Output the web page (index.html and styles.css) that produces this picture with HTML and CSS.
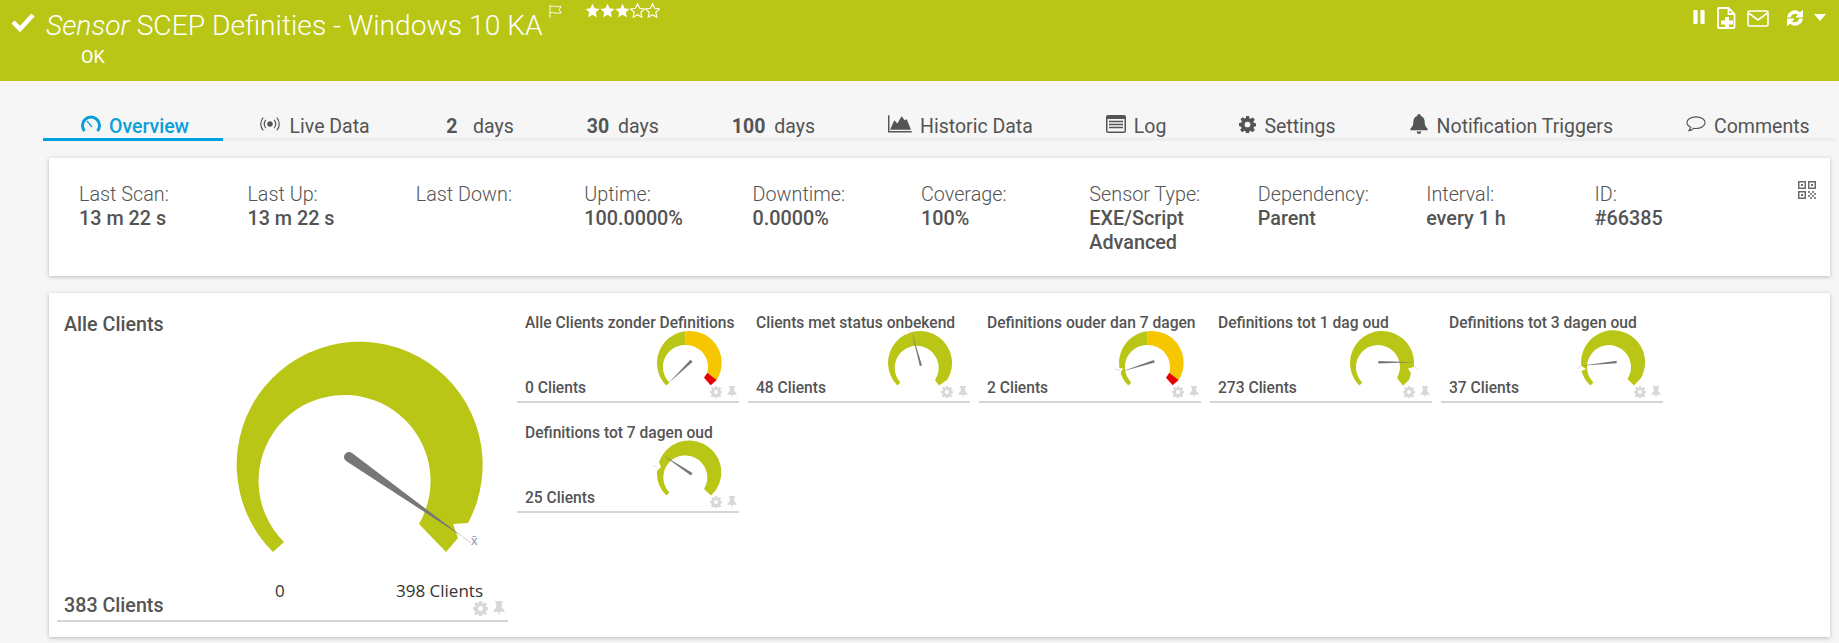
FILE: index.html
```html
<!DOCTYPE html>
<html>
<head>
    <title>SCEP Definities - Windows 10 KA</title>
    <link rel="stylesheet" href="styles.css">
</head>
<body>
    <svg class="icon-defs" width="0" height="0">
        <symbol id="gear" viewBox="0 0 16 16"><path fill-rule="evenodd" d="M6.600 0h2.800l.4 2.200 1.200.5L12.900 1.400l2 2-1.300 1.900.5 1.200 2.200.4v2.800l-2.200.4-.5 1.200 1.300 1.900-2 2-1.900-1.300-1.200.5-.4 2.200H6.600l-.4-2.200-1.200-.5-1.900 1.300-2-2 1.300-1.900-.5-1.200L0 9.400V6.600l2.200-.4.5-1.200L1.400 3.100l2-2 1.900 1.300 1.200-.5zM8 5.300a2.700 2.700 0 1 0 0 5.400 2.700 2.700 0 0 0 0-5.400z"/></symbol>
        <symbol id="pin" viewBox="0 0 12 16"><path d="M2 0h8v1.500L9 2v5l3 3v1.500H7L6 16l-1-4.500H0V10l3-3V2L2 1.500z"/></symbol>
        <symbol id="star" viewBox="0 0 16 16"><path d="M8 .8l2.200 4.900 5.300.6-4 3.600 1.100 5.300L8 12.500l-4.600 2.700 1.100-5.300-4-3.600 5.300-.6z"/></symbol>
    </svg>

    <header class="top-bar">
        <div class="top-title">
            <svg class="check" viewBox="0 0 24 20"><path d="M2 10l7 7L22 3" fill="none" stroke="#fff" stroke-width="4.500"/></svg>
            <h1><em>Sensor</em> SCEP Definities - Windows 10 KA</h1>
            <svg class="flag" viewBox="0 0 16 14"><path d="M1.500 0v14M1.500 1.500c4-1.500 6 1.500 12 0l-2 3.500 2 3.500c-6 1.500-8-1.500-12 0" fill="none" stroke="#fff"/></svg>
            <div class="stars">
                <svg class="star"><use href="#star"/></svg>
                <svg class="star"><use href="#star"/></svg>
                <svg class="star"><use href="#star"/></svg>
                <svg class="star empty"><use href="#star"/></svg>
                <svg class="star empty"><use href="#star"/></svg>
            </div>
            <div class="status">OK</div>
        </div>
        <div class="top-actions">
            <svg class="pause" viewBox="0 0 12 16"><rect x="0" y="0" width="4.500" height="15" rx="1.200" fill="#fff"/><rect x="7.500" y="0" width="4.500" height="15" rx="1.200" fill="#fff"/></svg>
            <svg class="add-page" viewBox="0 0 19 22"><path d="M1.500 1h10l6 6v13a1 1 0 0 1-1 1H2a1 1 0 0 1-1-1V1.500zM11.500 1v6h6" fill="none" stroke="#fff" stroke-width="1.800"/><path d="M8 10h4v3.500h4v4h-4V21H8v-3.500H4v-4h4z" fill="#fff"/></svg>
            <svg class="mail" viewBox="0 0 22 17"><rect x="1" y="1" width="20" height="15" rx="1.500" fill="none" stroke="#fff" stroke-width="1.600"/><path d="M1.500 3l9.500 7 9.500-7" fill="none" stroke="#fff" stroke-width="1.600"/></svg>
            <svg class="refresh" viewBox="0 0 20 18"><path d="M2.500 8A7.500 7.500 0 0 1 15 3.700L17.500 1.500v6.500H11l2.400-2.400A4.800 4.800 0 0 0 5.500 8zM17.500 10A7.500 7.500 0 0 1 5 14.300L2.500 16.500V10H9l-2.400 2.400A4.800 4.800 0 0 0 14.500 10z" fill="#fff" stroke="#fff"/></svg>
            <svg class="caret" viewBox="0 0 12 7"><path d="M0 0h12L6 7z" fill="#fff"/></svg>
        </div>
    </header>

    <nav class="tabs">
        <a class="tab active">
            <svg class="tab-icon" viewBox="0 0 20 18"><path d="M3.500 16A8.500 8.500 0 1 1 16.500 16" fill="none" stroke="#0a9fd8" stroke-width="3"/><path d="M6 6l5 6" stroke="#0a9fd8" stroke-width="1.200"/></svg>
            Overview
        </a>
        <a class="tab">
            <svg class="tab-icon icon-live" viewBox="0 0 22 18"><circle cx="11" cy="9" r="3" fill="#545454"/><path d="M6.500 4.500a6.500 6.500 0 0 0 0 9M15.500 4.500a6.500 6.500 0 0 1 0 9M3.500 2a10.500 10.500 0 0 0 0 14M18.500 2a10.500 10.500 0 0 1 0 14" fill="none" stroke="#545454" stroke-width="1.300"/></svg>
            Live Data
        </a>
        <a class="tab range-first"><b>2</b>&nbsp; days</a>
        <a class="tab"><b>30</b>&nbsp;days</a>
        <a class="tab"><b>100</b>&nbsp;days</a>
        <a class="tab">
            <svg class="tab-icon icon-wide" viewBox="0 0 23 17"><path d="M2 14l4-9 3 3 4-7 3 4 2-1 4 10z" fill="#545454"/><path d="M.7 0v16h22" fill="none" stroke="#545454" stroke-width="1.400"/></svg>
            Historic Data
        </a>
        <a class="tab">
            <svg class="tab-icon" viewBox="0 0 20 18"><rect width="20" height="18" rx="2" fill="#545454"/><rect x="1.500" y="4" width="17" height="12.500" fill="#f6f6f6"/><path d="M3 6.500h14M3 9.500h14M3 12.500h14" stroke="#545454" stroke-width="1.600"/></svg>
            Log
        </a>
        <a class="tab">
            <svg class="tab-icon gear-tab"><use href="#gear"/></svg>
            Settings
        </a>
        <a class="tab">
            <svg class="tab-icon icon-bell" viewBox="0 0 19 21"><path d="M9.500 0a2 2 0 0 1 2 2c3 1 4 3.500 4 7 0 3 1 4.500 3 6.500v1.500H.5v-1.500c2-2 3-3.500 3-6.500 0-3.500 1-6 4-7a2 2 0 0 1 2-2zM7 18.500h5a2.500 2.500 0 0 1-5 0z" fill="#545454"/></svg>
            Notification Triggers
        </a>
        <a class="tab">
            <svg class="tab-icon" viewBox="0 0 21 17"><path d="M10.500 1C5 1 1 3.700 1 7c0 2 1.500 3.800 4 5-.3 1.300-1 2.300-2 3.500 2 0 3.700-1 5-2.500.8.100 1.600.2 2.500.2 5.500 0 9.500-2.900 9.500-6.200S16 1 10.500 1z" fill="none" stroke="#545454" stroke-width="1.200"/></svg>
            Comments
        </a>
    </nav>

    <section class="panel info-panel">
        <dl class="info"><dt>Last Scan:</dt><dd>13 m 22 s</dd></dl>
        <dl class="info"><dt>Last Up:</dt><dd>13 m 22 s</dd></dl>
        <dl class="info"><dt>Last Down:</dt><dd></dd></dl>
        <dl class="info"><dt>Uptime:</dt><dd>100.0000%</dd></dl>
        <dl class="info"><dt>Downtime:</dt><dd>0.0000%</dd></dl>
        <dl class="info"><dt>Coverage:</dt><dd>100%</dd></dl>
        <dl class="info"><dt>Sensor Type:</dt><dd>EXE/Script Advanced</dd></dl>
        <dl class="info"><dt>Dependency:</dt><dd>Parent</dd></dl>
        <dl class="info"><dt>Interval:</dt><dd>every 1 h</dd></dl>
        <dl class="info"><dt>ID:</dt><dd>#66385</dd></dl>
        <svg class="qr" viewBox="0 0 18 18">
            <path d="M0 0h8v8H0zM10 0h8v8h-8zM0 10h8v8H0z" fill="#6a6a6a"/>
            <path d="M1.500 1.500h5v5h-5zM11.500 1.500h5v5h-5zM1.500 11.500h5v5h-5z" fill="#fff"/>
            <path d="M3 3h2v2H3zM13 3h2v2h-2zM3 13h2v2H3z" fill="#6a6a6a"/>
            <path d="M10 10h2v2h-2zM14 10h2v2h-2zM12 12h2v2h-2zM16 12h2v2h-2zM10 14h2v2h-2zM14 14h2v2h-2zM12 16h2v2h-2zM16 16h2v2h-2z" fill="#8a8a8a"/>
        </svg>
    </section>

    <section class="panel gauges-panel">
        <div class="main-gauge">
            <h2>Alle Clients</h2>
            <svg class="big-dial" viewBox="0 0 290 260">
                <path d="M65 242A123 123 0 1 1 260 213L245 214L250 228L238 242L211 214A86 86 0 1 0 76 232Z" fill="#b9c616"/>
                <path d="M144 143L255 227L138 151A5 5 0 0 1 144 143Z" fill="#777"/>
                <path d="M255 227L263 233" stroke="#ccc"/>
            </svg>
            <span class="avg">x&#772;</span>
            <span class="scale-min">0</span>
            <span class="scale-max">398 Clients</span>
            <div class="main-value">383 Clients</div>
            <div class="tools">
                <svg class="tool-gear"><use href="#gear"/></svg>
                <svg class="tool-pin"><use href="#pin"/></svg>
            </div>
        </div>

        <div class="small-gauges">
            <div class="gauge">
                <h3>Alle Clients zonder Definitions</h3>
                <svg class="dial" viewBox="-40 -36 80 66">
                    <path d="M-22.600 22.600A32 32 0 0 1-3.700-31.800L-4-18A22 22 0 0 0-19.600 19.600Z" fill="#b9c616"/>
                    <path d="M-3.700-31.800A32 32 0 0 1 27.700 17L18.300 9.700A22 22 0 0 0-4-18Z" fill="#f6c600"/>
                    <path d="M27.700 17L18.300 9.700 15 14.700 21.700 22.300Z" fill="#e60000"/>
                    <path d="M1.500-3.200L3.700-1.300-20.700 20.300Z" fill="#777"/>
                </svg>
                <div class="gauge-value">0 Clients</div>
                <div class="tools">
                    <svg class="tool-gear"><use href="#gear"/></svg>
                    <svg class="tool-pin"><use href="#pin"/></svg>
                </div>
            </div>
            <div class="gauge">
                <h3>Clients met status onbekend</h3>
                <svg class="dial" viewBox="-40 -36 80 66">
                    <path d="M-22.600 22.600A32 32 0 1 1 27.500 16.400L19 22.500 15 17A22 22 0 1 0-19.600 19.600Z" fill="#b9c616"/>
                    <path d="M-14.300-28L-11.700-34-8.300-32Z" fill="#fff"/>
                    <path d="M-11.500-33.500L-9.500-31.500" stroke="#ddd"/>
                    <path d="M-.2 3L2 2.500-8.300-31.300Z" fill="#777"/>
                </svg>
                <div class="gauge-value">48 Clients</div>
                <div class="tools">
                    <svg class="tool-gear"><use href="#gear"/></svg>
                    <svg class="tool-pin"><use href="#pin"/></svg>
                </div>
            </div>
            <div class="gauge">
                <h3>Definitions ouder dan 7 dagen</h3>
                <svg class="dial" viewBox="-40 -36 80 66">
                    <path d="M-22.600 22.600A32 32 0 0 1-3.700-31.800L-4-18A22 22 0 0 0-19.600 19.600Z" fill="#b9c616"/>
                    <path d="M-3.700-31.800A32 32 0 0 1 27.700 17L18.300 9.700A22 22 0 0 0-4-18Z" fill="#f6c600"/>
                    <path d="M27.700 17L18.300 9.700 15 14.700 21.700 22.300Z" fill="#e60000"/>
                    <path d="M-34.300 5.300L-28 5.300-31 11Z" fill="#fff"/>
                    <path d="M-36 6L-31 7.500" stroke="#ddd"/>
                    <path d="M2.800-3L3.800-.4-30 8.700Z" fill="#777"/>
                </svg>
                <div class="gauge-value">2 Clients</div>
                <div class="tools">
                    <svg class="tool-gear"><use href="#gear"/></svg>
                    <svg class="tool-pin"><use href="#pin"/></svg>
                </div>
            </div>
            <div class="gauge">
                <h3>Definitions tot 1 dag oud</h3>
                <svg class="dial" viewBox="-40 -36 80 66">
                    <path d="M-22.600 22.600A32 32 0 1 1 31.800 4L26 5.500 29 10 27 17 21 22.700 15 15A22 22 0 1 0-19.600 19.600Z" fill="#b9c616"/>
                    <path d="M32 3L36 6" stroke="#ddd"/>
                    <path d="M-3.700-2L-3.700.5 32-.7Z" fill="#777"/>
                </svg>
                <div class="gauge-value">273 Clients</div>
                <div class="tools">
                    <svg class="tool-gear"><use href="#gear"/></svg>
                    <svg class="tool-pin"><use href="#pin"/></svg>
                </div>
            </div>
            <div class="gauge">
                <h3>Definitions tot 3 dagen oud</h3>
                <svg class="dial" viewBox="-40 -36 80 66">
                    <path d="M-22.600 22.600A32 32 0 0 1-31.500 8L-27 6-31.700 3A32 32 0 1 1 28 15L21 22.500 14.500 16A22 22 0 1 0-19.600 19.600Z" fill="#b9c616"/>
                    <path d="M-36 6L-32 3" stroke="#ddd"/>
                    <path d="M3.700-2.200L3.700.2-32 2.700Z" fill="#777"/>
                </svg>
                <div class="gauge-value">37 Clients</div>
                <div class="tools">
                    <svg class="tool-gear"><use href="#gear"/></svg>
                    <svg class="tool-pin"><use href="#pin"/></svg>
                </div>
            </div>
            <div class="gauge">
                <h3>Definitions tot 7 dagen oud</h3>
                <svg class="dial" viewBox="-40 -36 80 66">
                    <path d="M-22.600 22.600A32 32 0 0 1-32-2L-28-6-30-11A32 32 0 1 1 27 17L22 22.500 15 16A22 22 0 1 0-19.600 19.600Z" fill="#b9c616"/>
                    <path d="M-36-8L-32-6" stroke="#ddd"/>
                    <path d="M3.500 0L1.800 2.500-26.300-18Z" fill="#777"/>
                </svg>
                <div class="gauge-value">25 Clients</div>
                <div class="tools">
                    <svg class="tool-gear"><use href="#gear"/></svg>
                    <svg class="tool-pin"><use href="#pin"/></svg>
                </div>
            </div>
        </div>
    </section>
</body>
</html>
```

FILE: styles.css
```css
* {
    box-sizing: border-box;
}
html, body {
    margin: 0;
    padding: 0;
}
body {
    height: 643px;
    overflow: hidden;
    background: #f6f6f6;
    font-family: Roboto, "Liberation Sans", sans-serif;
    color: #545454;
}
.icon-defs {
    display: none;
}
.top-bar {
    height: 81px;
    background: #b9c616;
    color: #fff;
    display: flex;
    justify-content: space-between;
    padding: 0 13px 0 11px;
}
.top-title {
    display: grid;
    grid-template-columns: 25px auto 21px auto;
    grid-template-rows: 37px auto;
    align-items: start;
}
.check {
    width: 24px;
    height: 20px;
    margin-top: 12px;
}
h1 {
    margin: 0 0 0 10px;
    padding-top: 11px;
    font-size: 28.200px;
    font-weight: 300;
    line-height: 30px;
    white-space: nowrap;
}
.flag {
    width: 16px;
    height: 13px;
    margin: 5px 0 0 5px;
}
.stars {
    display: flex;
    margin: 3px 0 0 21px;
}
.star {
    width: 15px;
    height: 15px;
    fill: #fff;
}
.star.empty {
    fill: none;
    stroke: #fff;
    stroke-width: 1.200px;
}
.status {
    grid-column: 2;
    padding: 9px 0 0 45px;
    font-size: 18px;
}
.top-actions {
    display: flex;
    align-items: flex-start;
    padding-top: 7px;
}
.pause {
    width: 12px;
    height: 15px;
    margin: 3px 12px 0 0;
}
.add-page {
    width: 19px;
    height: 22px;
    margin-right: 11px;
}
.mail {
    width: 22px;
    height: 17px;
    margin: 3px 16px 0 0;
}
.refresh {
    width: 20px;
    height: 18px;
    margin: 2px 9px 0 0;
}
.caret {
    width: 12px;
    height: 7px;
    margin-top: 7px;
}
.tabs {
    display: flex;
    height: 60px;
    margin: 0 3px 0 43px;
    padding-top: 33px;
    border-bottom: 3px solid #eeeeee;
}
.tab {
    display: flex;
    align-items: center;
    height: 24px;
    padding: 0 36.500px;
    font-size: 19.500px;
    white-space: nowrap;
}
.tab b {
    font-weight: 700;
    margin-right: 4px;
}
.tab.range-first {
    padding-left: 40px;
}
.tab.range-first b {
    margin-right: 6px;
}
.tab.active {
    color: #0a9fd8;
    font-weight: 500;
    border-bottom: 3px solid #00a2dc;
    height: 24px;
    box-sizing: content-box;
    padding: 0 34px 0 38px;
}
.tab-icon {
    width: 20px;
    height: 18px;
    margin: -4px 8px 0 0;
    fill: #545454;
}
.icon-live {
    margin-right: 10px;
}
.icon-wide {
    width: 24px;
}
.icon-bell {
    height: 20px;
}
.gear-tab {
    width: 17px;
    height: 17px;
}
.panel {
    background: #fff;
    box-shadow: 0 1px 4px rgba(0, 0, 0, 0.25);
}
.info-panel {
    position: relative;
    display: flex;
    width: 1781px;
    height: 118px;
    margin: 17px 0 0 49px;
    padding: 25px 0 0 30px;
}
.info {
    width: 168.400px;
    margin: 0;
    padding-right: 30px;
    font-size: 19.800px;
    line-height: 24px;
}
.info dt {
    font-weight: 300;
}
.info dd {
    margin: 0;
    font-weight: 500;
}
.qr {
    position: absolute;
    top: 23px;
    right: 14px;
    width: 18px;
    height: 18px;
}
.gauges-panel {
    display: flex;
    width: 1781px;
    height: 344px;
    margin: 17px 0 0 49px;
    padding: 0 0 0 8px;
}
.main-gauge {
    position: relative;
    width: 451px;
    height: 329px;
    border-bottom: 2px solid #d5d5d5;
    flex: none;
}
.main-gauge h2 {
    margin: 0;
    padding: 20px 0 0 7px;
    font-size: 19.700px;
    font-weight: 500;
    line-height: 24px;
}
.big-dial {
    position: absolute;
    left: 151px;
    top: 17px;
    width: 290px;
    height: 260px;
}
.avg {
    position: absolute;
    left: 414px;
    top: 240px;
    color: #8d94a8;
    font-size: 13px;
}
.scale-min, .scale-max {
    position: absolute;
    top: 286px;
    font-family: "Open Sans", sans-serif;
    font-size: 17px;
    color: #333;
}
.scale-min {
    left: 218px;
}
.scale-max {
    right: 25px;
}
.main-value {
    position: absolute;
    left: 7px;
    bottom: 3px;
    font-size: 19.700px;
    font-weight: 500;
}
.tools {
    position: absolute;
    right: 3px;
    bottom: 4px;
    display: flex;
    gap: 5px;
    fill: #d8d8d8;
}
.tool-gear {
    width: 15px;
    height: 15px;
}
.tool-pin {
    width: 12px;
    height: 15px;
}
.small-gauges {
    display: flex;
    flex-wrap: wrap;
    align-content: flex-start;
    gap: 0 9px;
    padding: 0 0 0 9px;
    width: 1300px;
}
.gauge {
    position: relative;
    width: 222px;
    height: 110px;
    border-bottom: 2px solid #d5d5d5;
}
.gauge h3 {
    margin: 0;
    padding: 20px 0 0 8px;
    font-size: 15.600px;
    font-weight: 500;
    line-height: 20px;
    white-space: nowrap;
}
.dial {
    position: absolute;
    left: 132px;
    top: 34px;
    width: 80px;
    height: 66px;
}
.gauge-value {
    position: absolute;
    left: 8px;
    bottom: 4px;
    font-size: 15.600px;
    font-weight: 500;
}
.gauge .tools {
    right: 2px;
    bottom: 3px;
}
.gauge .tool-gear {
    width: 12px;
    height: 12px;
}
.gauge .tool-pin {
    width: 10px;
    height: 12px;
}
```
